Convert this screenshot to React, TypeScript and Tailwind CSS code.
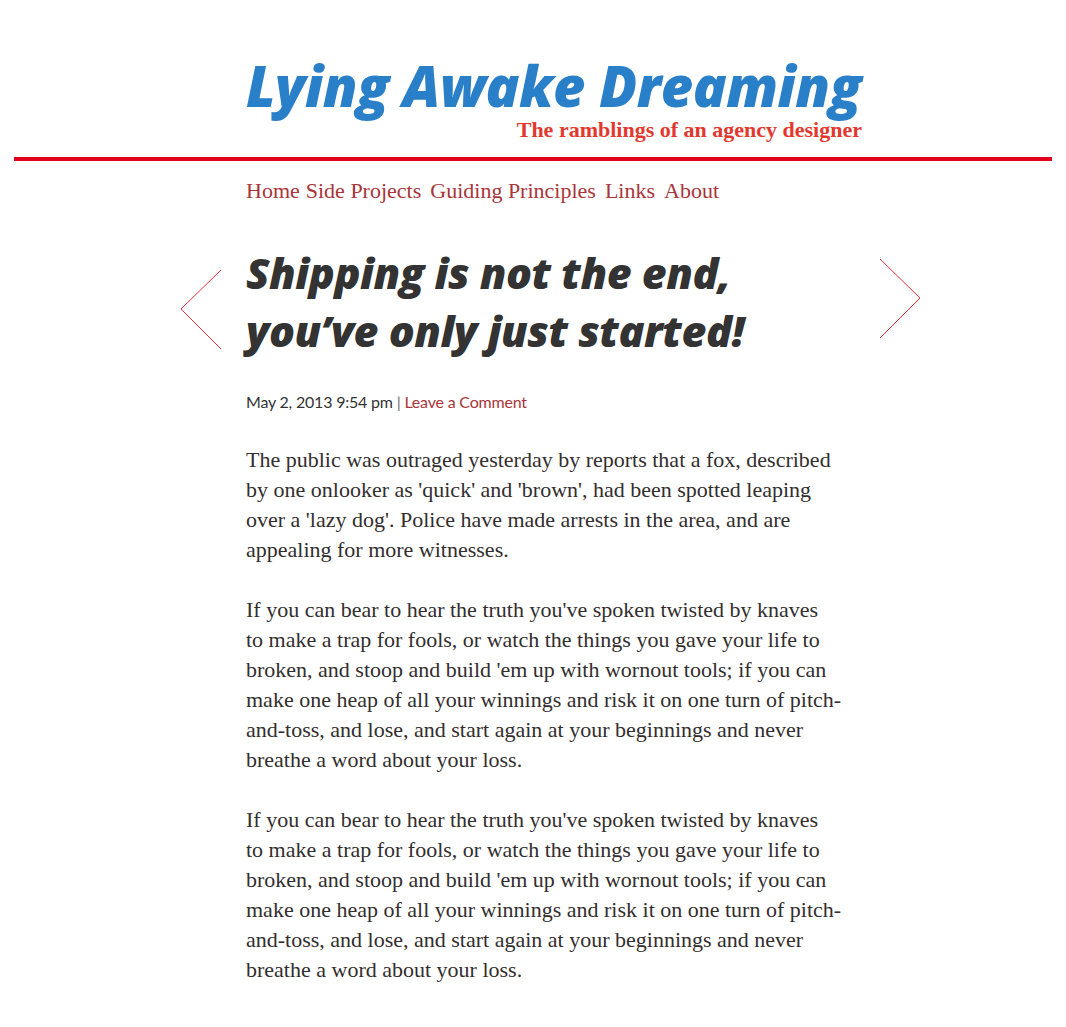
const kipling = (
  <>
    If you can bear to hear the truth you've spoken twisted by knaves<br />
    to make a trap for fools, or watch the things you gave your life to broken, and stoop and build 'em up with wornout tools; if you can make one heap of all your winnings and risk it on one turn of pitch-and-toss, and lose, and start again at your beginnings and never breathe a word about your loss.
  </>
)

const navLinks = ["Home", "Side Projects", "Guiding Principles", "Links", "About"]

const App = () => {
  return (
    <div className="bg-white min-h-screen pb-10">
      <header className="w-[616px] ml-[246px] pt-[60px]">
        <h1 className="font-['Open_Sans',sans-serif] font-extrabold italic text-[56px] leading-[50px] text-[#2a7fc9] tracking-[-0.5px] whitespace-nowrap">
          Lying Awake Dreaming
        </h1>
        <p className="mt-[8px] text-right font-['Liberation_Serif',serif] font-bold text-[22px] leading-[24px] text-[#e3382e]">
          The ramblings of an agency designer
        </p>
      </header>

      <div className="mx-[14px] mt-[15px] h-[4px] bg-[#e0001b]" />

      <main className="w-[616px] ml-[246px]">
        <nav className="mt-[15px] flex gap-[9px] font-['Liberation_Serif',serif] text-[22px] leading-[30px] text-[#a9353a]">
          {navLinks.map((l, i) => (
            <a key={l} href="#" className={i === 0 ? "-mr-[3px]" : ""}>{l}</a>
          ))}
        </nav>

        <div className="mt-[38px] flex items-start -ml-[66px] -mr-[59px]">
          <svg width="42" height="82" viewBox="0 0 42 82" className="mt-[25px] shrink-0">
            <polyline points="41,1 1,40 41,80" fill="none" stroke="#e8303c" strokeWidth="1" />
          </svg>
          <h2 className="ml-[24px] flex-1 font-['Open_Sans',sans-serif] font-extrabold italic text-[43px] leading-[58px] text-[#333333] tracking-[-0.5px]">
            Shipping is not the end,<br />you’ve only just started!
          </h2>
          <svg width="42" height="82" viewBox="0 0 42 82" className="mt-[14px] shrink-0">
            <polyline points="1,1 41,40 1,80" fill="none" stroke="#e8303c" strokeWidth="1" />
          </svg>
        </div>

        <p className="mt-[30px] font-['Lato',sans-serif] text-[16px] leading-[24px] text-[#333333] tracking-[-0.2px]">
          May 2, 2013 9:54 pm <span className="text-[#666]">|</span>{" "}
          <a href="#" className="text-[#a9353a]">Leave a Comment</a>
        </p>

        <article className="mt-[31px] w-[604px] font-['Liberation_Serif',serif] text-[22px] leading-[30px] text-[#332e2e]">
          <p className="mb-[30px]">
            The public was outraged yesterday by reports that a fox, described by one onlooker as 'quick' and 'brown', had been spotted leaping over a 'lazy dog'. Police have made arrests in the area, and are appealing for more witnesses.
          </p>
          <p className="mb-[30px]">{kipling}</p>
          <p className="mb-[30px]">{kipling}</p>
        </article>
      </main>
    </div>
  )
}

export default App
